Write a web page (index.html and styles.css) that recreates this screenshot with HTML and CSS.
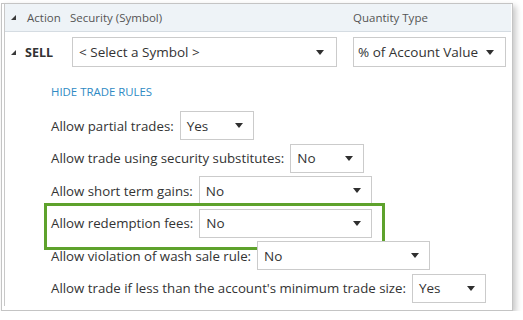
FILE: index.html
```html
<!DOCTYPE html>
<html>
<head>
<meta charset="utf-8">
<link rel="stylesheet" href="styles.css">
</head>
<body>
<div class="frame">
  <div class="panel">
    <div class="head">
      <span class="tog"></span>
      <span class="h-action">Action</span>
      <span class="h-sec">Security (Symbol)</span>
      <span class="h-qty">Quantity Type</span>
    </div>
    <div class="trade">
      <span class="tog"></span>
      <span class="sell">SELL</span>
      <div class="sel sym"><span>&lt; Select a Symbol &gt;</span><svg class="arr" width="8" height="5" viewBox="0 0 8 5"><polygon points="0,0 8,0 4,5"/></svg></div>
      <div class="sel qty"><span>% of Account Value</span><svg class="arr" width="8" height="5" viewBox="0 0 8 5"><polygon points="0,0 8,0 4,5"/></svg></div>
    </div>
    <div class="rules">
      <a class="hide">HIDE TRADE RULES</a>
      <div class="list">
        <div class="rule"><span class="lbl">Allow partial trades:</span><div class="sel short"><span>Yes</span><svg class="arr" width="8" height="5" viewBox="0 0 8 5"><polygon points="0,0 8,0 4,5"/></svg></div></div>
        <div class="rule"><span class="lbl">Allow trade using security substitutes:</span><div class="sel short"><span>No</span><svg class="arr" width="8" height="5" viewBox="0 0 8 5"><polygon points="0,0 8,0 4,5"/></svg></div></div>
        <div class="rule"><span class="lbl">Allow short term gains:</span><div class="sel long"><span>No</span><svg class="arr" width="8" height="5" viewBox="0 0 8 5"><polygon points="0,0 8,0 4,5"/></svg></div></div>
        <div class="rule marked"><span class="lbl">Allow redemption fees:</span><div class="sel long"><span>No</span><svg class="arr" width="8" height="5" viewBox="0 0 8 5"><polygon points="0,0 8,0 4,5"/></svg></div></div>
        <div class="rule"><span class="lbl">Allow violation of wash sale rule:</span><div class="sel long"><span>No</span><svg class="arr" width="8" height="5" viewBox="0 0 8 5"><polygon points="0,0 8,0 4,5"/></svg></div></div>
        <div class="rule"><span class="lbl">Allow trade if less than the account's minimum trade size:</span><div class="sel short"><span>Yes</span><svg class="arr" width="8" height="5" viewBox="0 0 8 5"><polygon points="0,0 8,0 4,5"/></svg></div></div>
      </div>
    </div>
  </div>
</div>
</body>
</html>
```
FILE: styles.css
```css
* { box-sizing: border-box; }
body {
  margin: 0;
  background: #fff;
  font-family: "Open Sans", "Noto Sans", sans-serif;
  color: #333;
}
.frame {
  margin: 3px 0 0 1px;
  width: 512px;
  height: 308px;
  border: 1px solid #c4c4c4;
  box-shadow: 3px 3px 6px rgba(0,0,0,0.22);
  padding: 0 1px 3px 2px;
  background: #fff;
}
.panel {
  height: 302px;
  border-left: 1px solid #c8c8c8;
}
.head {
  height: 28px;
  background: #eef3f7;
  border-bottom: 1px solid #d5dce2;
  display: grid;
  grid-template-columns: 16px 43px 283px 1fr;
  align-items: center;
  padding-left: 6px;
  font-size: 11.5px;
  color: #555;
}
.tog {
  width: 0;
  height: 0;
  border-left: 5px solid transparent;
  border-bottom: 5px solid #3a3a3a;
}
.trade {
  margin-top: 5px;
  height: 30px;
  display: grid;
  grid-template-columns: 14px 46px 282px 153px;
  align-items: center;
  padding-left: 6px;
}
.sell {
  font-weight: bold;
  font-size: 12.5px;
  color: #333;
}
.sel {
  display: flex;
  align-items: center;
  justify-content: space-between;
  border: 1px solid #cbcbcb;
  background: #fff;
  height: 29px;
  padding: 0 10px 0 6px;
  font-size: 13.5px;
  color: #333;
}
.arr { fill: #2f2f2f; flex: none; }
.sym { height: 30px; width: 265px; margin-left: 1px; padding-right: 12px; }
.qty { height: 30px; width: 153px; padding-left: 4px; padding-right: 11px; }
.rules {
  padding-left: 46px;
}
.hide {
  display: block;
  margin-top: 17px;
  height: 16px;
  line-height: 16px;
  font-size: 11.4px;
  color: #2f8ac4;
  margin-bottom: 11px;
}
.list {
  display: flex;
  flex-direction: column;
  gap: 3.6px;
}
.rule {
  display: flex;
  align-items: center;
  gap: 6px;
  height: 29px;
  font-size: 13.25px;
  position: relative;
}
.lbl { white-space: nowrap; }
.short { width: 74px; }
.long { width: 173px; }
.marked::before {
  content: "";
  position: absolute;
  left: -7px;
  top: -6px;
  width: 335px;
  height: 41px;
  border: 3px solid #5ea22c;
  pointer-events: none;
}
```
